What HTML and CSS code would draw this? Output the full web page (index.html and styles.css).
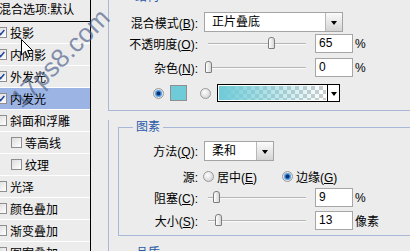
FILE: index.html
```html
<!DOCTYPE html>
<html>
<head>
<meta charset="utf-8">
<link rel="stylesheet" href="styles.css">
</head>
<body>
<div class="dialog">
  <div class="sidebar">
    <div class="side-head">混合选项:默认</div>
    <div class="side-row"><span class="cb"><svg viewBox="0 0 11 11"><path d="M2.2 5.2 L4.4 8 L9 2.4" /></svg></span>投影</div>
    <div class="side-row"><span class="cb"><svg viewBox="0 0 11 11"><path d="M2.2 5.2 L4.4 8 L9 2.4" /></svg></span>内阴影</div>
    <div class="side-row"><span class="cb"><svg viewBox="0 0 11 11"><path d="M2.2 5.2 L4.4 8 L9 2.4" /></svg></span>外发光</div>
    <div class="side-row sel"><span class="cb"><svg viewBox="0 0 11 11"><path d="M2.2 5.2 L4.4 8 L9 2.4" /></svg></span>内发光</div>
    <div class="side-row"><span class="cb"></span>斜面和浮雕</div>
    <div class="side-row ind"><span class="cb"></span>等高线</div>
    <div class="side-row ind"><span class="cb"></span>纹理</div>
    <div class="side-row"><span class="cb"></span>光泽</div>
    <div class="side-row"><span class="cb"></span>颜色叠加</div>
    <div class="side-row"><span class="cb"></span>渐变叠加</div>
    <div class="side-row"><span class="cb"></span>图案叠加</div>
  </div>
  <div class="main">
    <fieldset class="group g-struct">
      <legend>结构</legend>
      <div class="row r1">
        <span class="lbl">混合模式(<u>B</u>):</span>
        <div class="select wide"><span class="sel-text">正片叠底</span><span class="arrow"></span></div>
      </div>
      <div class="row r2">
        <span class="lbl">不透明度(<u>O</u>):</span>
        <div class="slider"><span class="track"></span><span class="thumb" style="left:64px"></span></div>
        <span class="num">65</span><span class="unit">%</span>
      </div>
      <div class="row r3">
        <span class="lbl">杂色(<u>N</u>):</span>
        <div class="slider"><span class="track"></span><span class="thumb" style="left:1px"></span></div>
        <span class="num">0</span><span class="unit">%</span>
      </div>
      <div class="row r4">
        <span class="radio on"></span>
        <span class="swatch"></span>
        <span class="radio"></span>
        <div class="grad"><span class="grad-fill"></span><span class="grad-arrow"></span></div>
      </div>
    </fieldset>
    <div class="lower">
      <fieldset class="group g-elem">
        <legend>图素</legend>
        <div class="row r5">
          <span class="lbl">方法(<u>Q</u>):</span>
          <div class="select narrow"><span class="sel-text">柔和</span><span class="arrow"></span></div>
        </div>
        <div class="row r6">
          <span class="lbl">源:</span>
          <span class="radio"></span><span class="opt">居中(<u>E</u>)</span>
          <span class="radio on second"></span><span class="opt">边缘(<u>G</u>)</span>
        </div>
        <div class="row r7">
          <span class="lbl">阻塞(<u>C</u>):</span>
          <div class="slider"><span class="track"></span><span class="thumb" style="left:9px"></span></div>
          <span class="num">9</span><span class="unit">%</span>
        </div>
        <div class="row r8">
          <span class="lbl">大小(<u>S</u>):</span>
          <div class="slider"><span class="track"></span><span class="thumb" style="left:11px"></span></div>
          <span class="num">13</span><span class="unit">像素</span>
        </div>
      </fieldset>
      <fieldset class="group g-qual">
        <legend>品质</legend>
      </fieldset>
    </div>
  </div>
  <div class="watermark">17ps8.com</div>
  <svg class="cursor" width="13" height="20" viewBox="0 0 13 20"><path d="M0.5 0.5 L0.5 16 L4.3 12.3 L6.8 18.2 L9 17.2 L6.6 11.5 L11.5 11.5 Z" fill="#fff" stroke="#000" stroke-width="1"/></svg>
</div>
</body>
</html>
```
FILE: styles.css
```css
html, body {
  margin: 0;
  padding: 0;
}
body {
  width: 410px;
  height: 251px;
  overflow: hidden;
  background: #ececec;
  font-family: "Liberation Sans", "Noto Sans CJK SC", sans-serif;
  font-size: 12px;
  color: #000;
}
u { text-decoration: underline; text-underline-offset: 1px; }

.dialog {
  display: flex;
  height: 251px;
  position: relative;
  overflow: hidden;
}

/* ---------- left list ---------- */
.sidebar {
  width: 90px;
  flex: none;
  border-right: 1px solid #000;
  background: #ececec;
  overflow: hidden;
}
.side-head {
  height: 21px;
  line-height: 21px;
  border-bottom: 1px solid #000;
  margin-left: -1px;
  white-space: nowrap;
}
.side-row {
  height: 21px;
  border-bottom: 1px solid #fff;
  display: flex;
  align-items: center;
  gap: 3px;
  margin-left: -4px;
  white-space: nowrap;
}
.side-row.sel { background: #9bb4e4; }
.side-row.ind { padding-left: 15px; }

.cb {
  width: 11px;
  height: 11px;
  box-sizing: border-box;
  border: 1px solid #8e8e8e;
  background: linear-gradient(135deg, #dcdcdc, #ffffff);
  flex: none;
  display: block;
}
.cb svg {
  display: block;
  width: 9px;
  height: 9px;
}
.cb svg path {
  fill: none;
  stroke: #21479a;
  stroke-width: 1.8;
}

/* ---------- main ---------- */
.main {
  flex: 1;
  padding-left: 17px;
  overflow: hidden;
  min-width: 0;
}
.group {
  margin: 0;
  padding: 0;
  border: 1px solid #a9b8d9;
  min-width: 0;
}
.group legend {
  padding: 0 3px;
  color: #2a5aa8;
  line-height: 14px;
  height: 14px;
  font-size: 12px;
}
.g-struct {
  margin-top: -10px;
  padding-bottom: 8px;
  margin-right: -20px;
}
.g-struct legend { margin-left: 23px; }
.lower {
  border-left: 1px solid #a9b8d9;
  padding-left: 9px;
  height: 200px;
}
.g-elem {
  margin-top: 9px;
  padding-bottom: 5px;
  margin-right: -20px;
}
.g-elem legend, .g-qual legend { margin-left: 14px; }
.g-qual {
  margin-top: 10px;
  height: 20px;
  margin-right: -20px;
}

.row {
  display: flex;
  align-items: center;
  white-space: nowrap;
}
.lbl {
  width: 79px;
  text-align: right;
  margin-right: 6px;
  flex: none;
}
.g-struct .lbl { width: 89px; }
.r1 { margin-top: 8px; height: 20px; }
.r2 { margin-top: 2px; height: 19px; }
.r3 { margin-top: 5px; height: 19px; }
.r4 { margin-top: 7px; height: 18px; padding-left: 44px; }
.r5 { margin-top: 7px; height: 19px; }
.r6 { margin-top: 8px; height: 16px; }
.r7 { margin-top: 4px; height: 19px; }
.r8 { margin-top: 4px; height: 19px; }

.select {
  display: flex;
  height: 20px;
  box-sizing: border-box;
  border: 1px solid #a4a4a4;
  background: #fff;
}
.select.wide { width: 139px; }
.select.narrow { width: 70px; }
.sel-text {
  flex: 1;
  padding-left: 7px;
  line-height: 18px;
}
.arrow {
  width: 16px;
  border-left: 1px solid #b8b8b8;
  background: linear-gradient(#fbfbfb, #d4d4d4);
  position: relative;
}
.arrow::after, .grad-arrow::after {
  content: "";
  position: absolute;
  left: 50%;
  top: 50%;
  margin-left: -3px;
  margin-top: -1px;
  border-left: 3px solid transparent;
  border-right: 3px solid transparent;
  border-top: 4px solid #000;
}

.slider {
  width: 111px;
  height: 19px;
  position: relative;
  flex: none;
}
.track {
  position: absolute;
  left: 4px;
  width: 98px;
  top: 9px;
  height: 2px;
  box-sizing: border-box;
  border-top: 1px solid #b5b5b5;
  background: #fafafa;
}
.thumb {
  position: absolute;
  top: 3px;
  width: 7px;
  height: 12px;
  box-sizing: border-box;
  border: 1px solid #7d7d7d;
  border-radius: 3px 3px 1px 1px;
  background: linear-gradient(90deg, #ffffff, #d6d6d6);
}
.num {
  width: 38px;
  height: 19px;
  box-sizing: border-box;
  border: 1px solid #a6a6a6;
  background: #fff;
  padding-left: 3px;
  line-height: 17px;
  flex: none;
}
.unit {
  margin-left: 2px;
}

.radio {
  width: 11px;
  height: 11px;
  box-sizing: border-box;
  border-radius: 50%;
  border: 1px solid #9a9a9a;
  background: radial-gradient(circle at 40% 35%, #ffffff, #c8c8c8);
  flex: none;
  position: relative;
}
.radio.on {
  background: radial-gradient(circle, #0d2f6e 0 1.5px, #2e7fd0 2.2px, #7fb9ea 3.5px, #e4e4e4 4px, #c6c6c6);
}
.r4 .swatch {
  width: 17px;
  height: 16px;
  box-sizing: border-box;
  border: 1px solid #8f8f8f;
  background: #6fcbd8;
  margin-left: 6px;
  flex: none;
}
.r4 .radio + .swatch + .radio { margin-left: 13px; }
.grad {
  margin-left: 6px;
  width: 123px;
  height: 18px;
  box-sizing: border-box;
  border: 1px solid #000;
  display: flex;
  background: #fff;
}
.grad-fill {
  flex: 1;
  margin: 1px;
  background:
    linear-gradient(90deg, rgba(110, 203, 216, 1), rgba(110, 203, 216, 0)),
    conic-gradient(#cccccc 25%, #ffffff 0 50%, #cccccc 0 75%, #ffffff 0) 0 0 / 8px 8px;
}
.grad-arrow {
  width: 11px;
  border-left: 1px solid #000;
  background: #fff;
  position: relative;
}
.r6 .lbl { margin-right: 5px; }
.opt { margin-left: 3px; }
.radio.second { margin-left: 25px; }

/* ---------- overlays ---------- */
.watermark {
  position: absolute;
  left: -10px;
  top: 43px;
  width: 140px;
  text-align: center;
  font-family: "Liberation Sans", sans-serif;
  font-size: 26px;
  line-height: 30px;
  color: rgba(80, 100, 140, 0.7);
  transform: rotate(-45deg);
  pointer-events: none;
}
.cursor {
  position: absolute;
  left: 21px;
  top: 39px;
}
```
